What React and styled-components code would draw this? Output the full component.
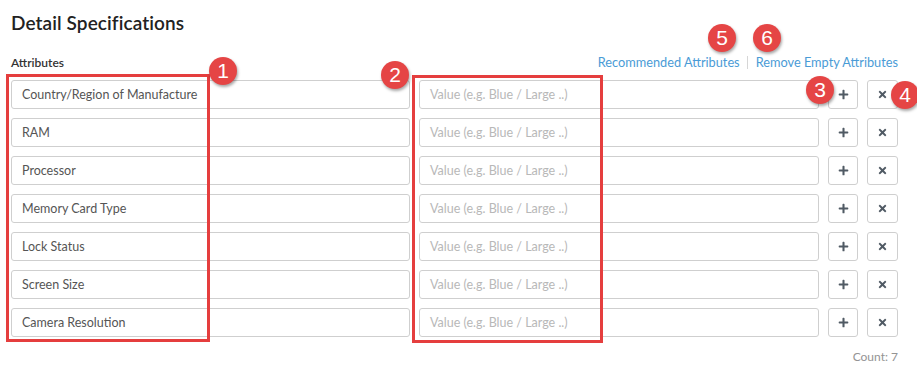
import React from "react";
import styled, { createGlobalStyle } from "styled-components";
import { FaPlus, FaTimes } from "react-icons/fa";

const Global = createGlobalStyle`
  html, body { margin: 0; padding: 0; background: #fff; }
  body { font-family: Lato, "Open Sans", sans-serif; }
  * { box-sizing: border-box; }
`;

const Page = styled.div`
  position: relative;
  width: 917px;
  height: 374px;
  padding: 11px 0 0 11px;
`;

const Title = styled.h2`
  margin: 0;
  font-size: 19px;
  font-weight: 600;
  color: #222;
  line-height: 24px;
  letter-spacing: 0.1px;
`;

const HeaderRow = styled.div`
  display: flex;
  align-items: center;
  justify-content: space-between;
  width: 887px;
  margin-top: 19px;
  height: 16px;
`;

const Label = styled.span`
  font-size: 12px;
  font-weight: 600;
  color: #333;
`;

const Links = styled.div`
  display: flex;
  align-items: center;
  font-size: 12.75px;
  color: #4a9bd6;
`;

const Link = styled.span`
  cursor: pointer;
`;

const Sep = styled.span`
  width: 1px;
  height: 13px;
  background: #d6d6d6;
  margin: 0 8px 0 7px;
`;

const Rows = styled.div`
  display: flex;
  flex-direction: column;
  gap: 9px;
  margin-top: 10px;
`;

const Row = styled.div`
  display: grid;
  grid-template-columns: 399px 400px 30px 31px;
  column-gap: 9px;
  height: 29px;
`;

const Field = styled.div`
  border: 1px solid #cfcfcf;
  border-radius: 3px;
  padding: 0 10px;
  display: flex;
  align-items: center;
  font-size: 12.5px;
  color: ${(p) => (p.$placeholder ? "#b8b8b8" : "#555")};
`;

const IconBtn = styled.button`
  border: 1px solid #cfcfcf;
  border-radius: 3px;
  background: #fff;
  display: flex;
  align-items: center;
  justify-content: center;
  padding: 0;
  color: #505a64;
`;

const Count = styled.div`
  width: 887px;
  text-align: right;
  font-size: 12px;
  color: #949494;
  margin-top: 12px;
`;

const Frame = styled.div`
  position: absolute;
  border: 3px solid #e53e3e;
  left: ${(p) => p.$x}px;
  top: ${(p) => p.$y}px;
  width: ${(p) => p.$w}px;
  height: ${(p) => p.$h}px;
  pointer-events: none;
`;

const Badge = styled.div`
  position: absolute;
  width: 28px;
  height: 28px;
  border-radius: 50%;
  background: #e54545;
  color: #fff;
  font-family: Arial, "Liberation Sans", sans-serif;
  font-size: 21px;
  line-height: 28px;
  text-align: center;
  left: ${(p) => p.$x - 14}px;
  top: ${(p) => p.$y - 14}px;
  box-shadow: 1px 2px 3px rgba(0, 0, 0, 0.35);
`;

const attrs = [
  "Country/Region of Manufacture",
  "RAM",
  "Processor",
  "Memory Card Type",
  "Lock Status",
  "Screen Size",
  "Camera Resolution",
];

export default function App() {
  return (
    <>
      <Global />
      <Page>
        <Title>Detail Specifications</Title>
        <HeaderRow>
          <Label>Attributes</Label>
          <Links>
            <Link>Recommended Attributes</Link>
            <Sep />
            <Link>Remove Empty Attributes</Link>
          </Links>
        </HeaderRow>
        <Rows>
          {attrs.map((a) => (
            <Row key={a}>
              <Field>{a}</Field>
              <Field $placeholder>Value (e.g. Blue / Large ..)</Field>
              <IconBtn>
                <FaPlus size={11} />
              </IconBtn>
              <IconBtn>
                <FaTimes size={11} />
              </IconBtn>
            </Row>
          ))}
        </Rows>
        <Count>Count: 7</Count>

        <Frame $x={6} $y={74} $w={204} $h={268} />
        <Frame $x={412} $y={75} $w={191} $h={268} />
        <Badge $x={223} $y={71}>1</Badge>
        <Badge $x={395} $y={75}>2</Badge>
        <Badge $x={820} $y={90}>3</Badge>
        <Badge $x={905} $y={95}>4</Badge>
        <Badge $x={722} $y={38}>5</Badge>
        <Badge $x={767} $y={38}>6</Badge>
      </Page>
    </>
  );
}
